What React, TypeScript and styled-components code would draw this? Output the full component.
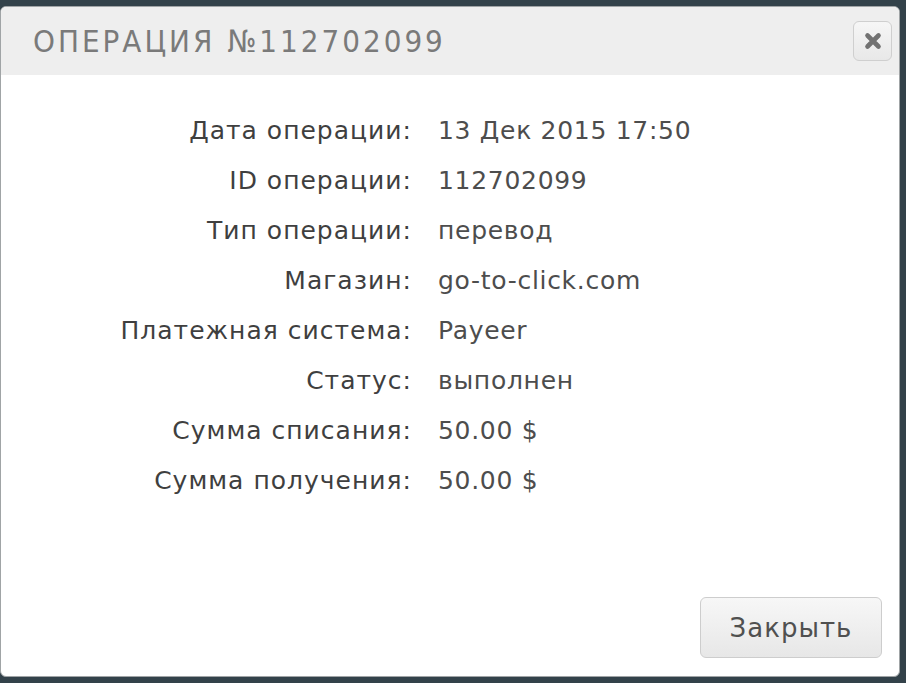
import React from "react";
import styled, { createGlobalStyle } from "styled-components";

const Global = createGlobalStyle`
  html, body { margin: 0; padding: 0; background: #33424a; }
  body { width: 906px; height: 683px; overflow: hidden; }
`;

const Modal = styled.div`
  margin-top: 6px;
  width: 898px;
  height: 669px;
  background: #fff;
  border: 1px solid #a0a4a6;
  border-radius: 6px;
  overflow: hidden;
  display: flex;
  flex-direction: column;
`;

const Header = styled.div`
  height: 68px;
  background: #eeeeee;
  display: flex;
  align-items: center;
  justify-content: space-between;
  padding: 0 7px 0 32px;
`;

const Title = styled.h3`
  margin: 0;
  font-family: "Liberation Sans Narrow", "DejaVu Sans Condensed", "Liberation Sans", sans-serif;
  font-weight: normal;
  font-size: 31px;
  letter-spacing: 3px;
  color: #7a7a7a;
`;

const CloseX = styled.button`
  width: 39px;
  height: 40px;
  border: 1px solid #cfcfcf;
  border-radius: 6px;
  background: linear-gradient(#f6f6f6, #e8e8e8);
  display: flex;
  align-items: center;
  justify-content: center;
  padding: 0;
`;

const Body = styled.div`
  flex: 1;
  padding-top: 31px;
  display: grid;
  grid-template-columns: 410px 1fr;
  column-gap: 27px;
  grid-auto-rows: 50px;
  align-content: start;
  font-family: "DejaVu Sans", sans-serif;
  font-size: 25px;
  letter-spacing: 1px;
`;

const Label = styled.div`
  text-align: right;
  color: #3f3f3f;
  line-height: 50px;
  white-space: nowrap;
  margin-right: -1px;
`;

const Value = styled.div`
  color: #4d4d4d;
  line-height: 50px;
  white-space: nowrap;
  letter-spacing: 0.7px;
`;

const Footer = styled.div`
  display: flex;
  justify-content: flex-end;
  padding: 0 17px 18px 0;
`;

const Button = styled.button`
  width: 182px;
  height: 61px;
  border: 1px solid #cdcdcd;
  border-radius: 6px;
  background: linear-gradient(#f7f7f7, #e7e7e7);
  font-family: "DejaVu Sans", sans-serif;
  font-size: 26px;
  letter-spacing: 1px;
  color: #505050;
  padding: 0;
`;

const rows: [string, string][] = [
  ["Дата операции:", "13 Дек 2015 17:50"],
  ["ID операции:", "112702099"],
  ["Тип операции:", "перевод"],
  ["Магазин:", "go-to-click.com"],
  ["Платежная система:", "Payeer"],
  ["Статус:", "выполнен"],
  ["Сумма списания:", "50.00 $"],
  ["Сумма получения:", "50.00 $"],
];

export default function App() {
  return (
    <>
      <Global />
      <Modal>
        <Header>
          <Title>ОПЕРАЦИЯ №112702099</Title>
          <CloseX aria-label="close">
            <svg width="18" height="18" viewBox="0 0 18 18">
              <path d="M3.5 3.5 L14.5 14.5 M14.5 3.5 L3.5 14.5" stroke="#727272" strokeWidth="4.6" strokeLinecap="round" />
            </svg>
          </CloseX>
        </Header>
        <Body>
          {rows.map(([l, v]) => (
            <React.Fragment key={l}>
              <Label>{l}</Label>
              <Value>{v}</Value>
            </React.Fragment>
          ))}
        </Body>
        <Footer>
          <Button>Закрыть</Button>
        </Footer>
      </Modal>
    </>
  );
}
